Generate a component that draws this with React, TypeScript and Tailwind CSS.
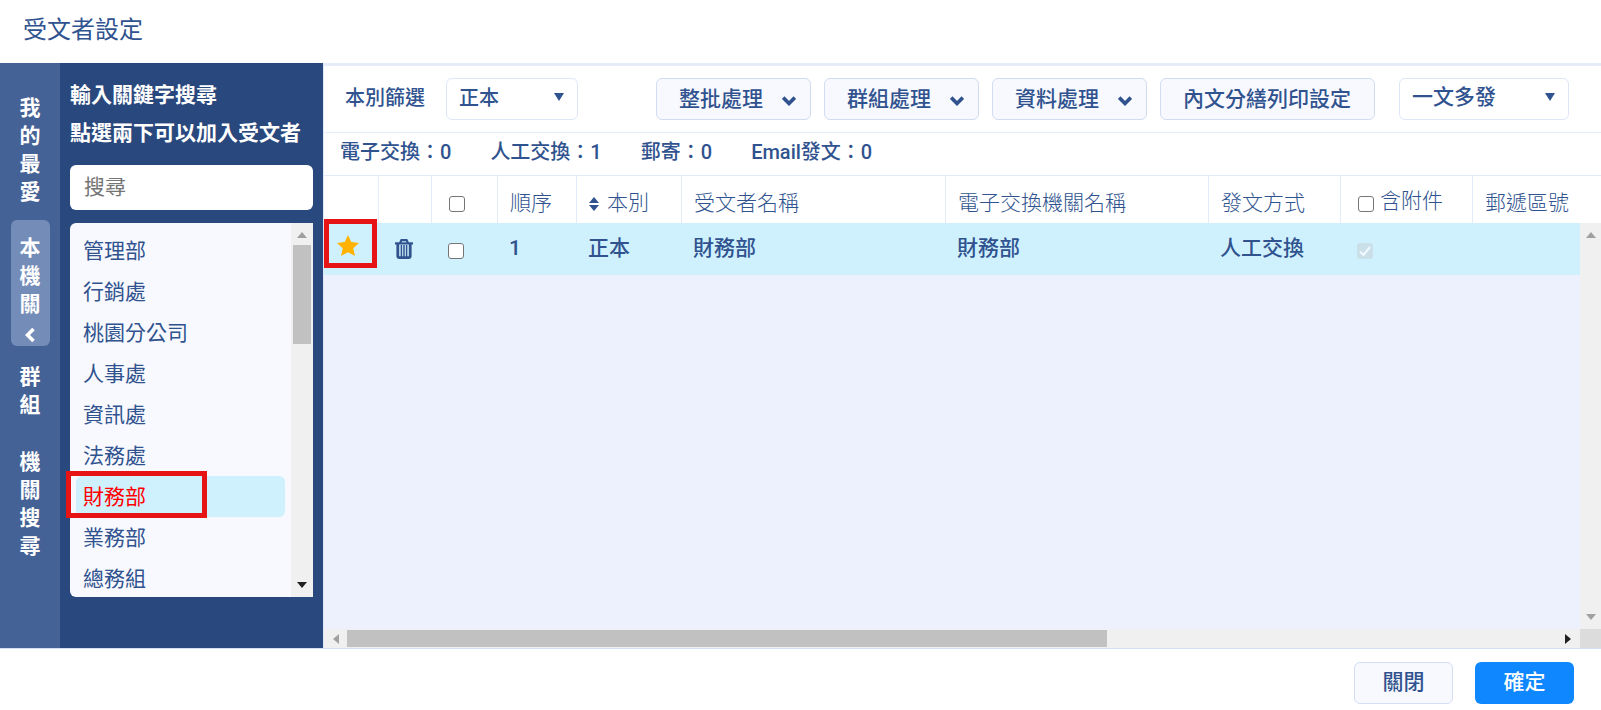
import type { ReactNode } from "react";

const departments = ["管理部", "行銷處", "桃園分公司", "人事處", "資訊處", "法務處", "財務部", "業務部", "總務組"];

const stats = ["電子交換：0", "人工交換：1", "郵寄：0", "Email發文：0"];

const arrowPaths = {
  up: "M0 6 L5 0 L10 6 Z",
  down: "M0 0 L10 0 L5 6 Z",
  left: "M6 0 L6 10 L0 5 Z",
  right: "M0 0 L6 5 L0 10 Z",
};

function Arrow({ dir, className }: { dir: keyof typeof arrowPaths; className: string }) {
  const flat = dir === "up" || dir === "down";
  return (
    <svg
      aria-hidden="true"
      viewBox={flat ? "0 0 10 6" : "0 0 6 10"}
      preserveAspectRatio="none"
      className={`shrink-0 ${className}`}
      fill="currentColor"
    >
      <path d={arrowPaths[dir]} />
    </svg>
  );
}

function Chevron() {
  return (
    <svg aria-hidden="true" viewBox="0 0 14 10" className="mt-[2px] h-[10px] w-[14px]" fill="none" stroke="currentColor" strokeWidth="3.6">
      <path d="M1.200 1.600 L7 7.400 L12.800 1.600" />
    </svg>
  );
}

function Trash() {
  return (
    <svg aria-hidden="true" viewBox="0 0 18 20" className="h-5 w-[18px]" fill="none" stroke="currentColor">
      <path d="M0 4.400 H18" strokeWidth="2.2" />
      <path d="M5 4 L6.400 1.200 H11.600 L13 4" strokeWidth="2.2" />
      <path d="M2.800 5 V17 Q2.800 18.600 4.400 18.600 H13.600 Q15.200 18.600 15.200 17 V5" strokeWidth="2.8" />
      <path d="M6.400 6 V18 M9 6 V18 M11.600 6 V18" strokeWidth="1.500" />
    </svg>
  );
}

function Star() {
  return (
    <svg aria-hidden="true" viewBox="0 0 22 21" className="h-[21px] w-[22px]" fill="#ffb300">
      <path d="M11 0 L14.300 7 L22 8 L16.300 13.200 L18 21 L11 17.200 L4 21 L5.700 13.200 L0 8 L7.700 7 Z" />
    </svg>
  );
}

function Picker({ label, value, options, className }: { label: string; value: string; options: string[]; className: string }) {
  return (
    <div className={`relative flex ${className}`}>
      <select
        aria-label={label}
        defaultValue={value}
        className="h-[42px] w-full appearance-none rounded-md border border-[#dfe6f7] bg-white pb-[2px] pl-3 font-medium"
      >
        {options.map((o) => (
          <option key={o}>{o}</option>
        ))}
      </select>
      <Arrow dir="down" className="pointer-events-none absolute top-[15px] right-[14px] h-2 w-[10px]" />
    </div>
  );
}

function ToolButton({ children, menu }: { children: ReactNode; menu?: boolean }) {
  return (
    <button
      type="button"
      className={`flex h-[42px] items-center gap-[19px] rounded-md border border-[#d0dcf0] bg-[#f8f9fe] pt-[2px] pl-[22px] text-[21px] font-medium whitespace-nowrap ${menu ? "pr-[14px]" : "pr-[23px]"}`}
    >
      {children}
      {menu && <Chevron />}
    </button>
  );
}

function SideTab({ name, active }: { name: string; active?: boolean }) {
  return (
    <button
      type="button"
      className={`flex w-[39px] flex-col items-center rounded-md text-[21px] leading-7 font-bold ${active ? "bg-[#748cb8] pt-[14px] pb-1" : ""}`}
    >
      {[...name].map((c) => (
        <span key={c}>{c}</span>
      ))}
      {active && (
        <svg aria-hidden="true" viewBox="0 0 10 14" className="mt-[10px] h-[14px] w-[10px]" fill="none" stroke="currentColor" strokeWidth="3.6">
          <path d="M8.500 1 L2.500 7 L8.500 13" />
        </svg>
      )}
    </button>
  );
}

const checkbox = "block size-4 appearance-none rounded-[3px] border border-[#767676] bg-white";
const th = "border-r border-[#e3eaf8] pl-3 pt-2 text-left font-light whitespace-nowrap";
const td = "pl-[11px] text-left font-medium whitespace-nowrap";

export default function App() {
  return (
    <div className="flex min-h-screen flex-col bg-white font-[Roboto,'Noto_Sans_CJK_TC',sans-serif] text-[#30538f]">
      <header className="flex h-[63px] items-center px-[23px] pb-1">
        <h1 className="text-2xl">受文者設定</h1>
      </header>

      <div className="flex flex-1 border-b border-[#d3dff5]">
        <nav className="flex w-[60px] shrink-0 flex-col items-center bg-[#456296] pt-[31px] text-white">
          <SideTab name="我的最愛" />
          <div className="mt-[14px]">
            <SideTab name="本機關" active />
          </div>
          <div className="mt-[17px]">
            <SideTab name="群組" />
          </div>
          <div className="mt-[29px]">
            <SideTab name="機關搜尋" />
          </div>
        </nav>

        <aside className="w-[263px] shrink-0 bg-[#29487d] px-[10px] pt-[13px]">
          <div className="text-[21px] leading-[38px] font-bold whitespace-nowrap text-white">
            <p>輸入關鍵字搜尋</p>
            <p>點選兩下可以加入受文者</p>
          </div>
          <input
            type="search"
            aria-label="搜尋"
            placeholder="搜尋"
            className="mt-[13px] block h-[45px] w-full rounded-md bg-white px-[14px] pb-[2px] text-[21px] placeholder:text-[#757575]"
          />
          <div className="mt-[13px] flex h-[374px] rounded-l-md bg-[#f8f9fe]">
            <ul className="flex-1 pt-[7px] pr-[6px] pl-[6px] text-[21px] leading-[39px]">
              {departments.map((d) => (
                <li key={d} className="relative">
                  <button
                    type="button"
                    className={`block w-full rounded-md pt-[2px] pl-[7px] text-left ${d === "財務部" ? "bg-[#cff1fe] text-[#ff0000]" : ""}`}
                  >
                    {d}
                  </button>
                  {d === "財務部" && (
                    <span className="pointer-events-none absolute -top-[5px] -left-[10px] h-[47px] w-[141px] border-5 border-[#e61414]" />
                  )}
                </li>
              ))}
            </ul>
            <div className="flex w-[22px] flex-col items-center bg-[#f0f0f0] py-[9px]">
              <Arrow dir="up" className="h-[6px] w-[10px] text-[#a0a0a0]" />
              <div className="mt-[7px] h-[99px] w-[18px] bg-[#c1c1c1]" />
              <Arrow dir="down" className="mt-auto h-[6px] w-[10px] text-[#202020]" />
            </div>
          </div>
        </aside>

        <main className="flex min-w-0 flex-1 flex-col border-l border-[#dfe6f7] bg-[#edf1fd]">
          <div className="flex h-[70px] items-center border-t-3 border-b border-[#e6ecf9] bg-white pr-8 pl-[21px] text-xl font-medium whitespace-nowrap">
            <span className="pb-[2px]">本別篩選</span>
            <Picker label="本別篩選" value="正本" options={["正本", "副本"]} className="ml-[21px] w-[132px]" />
            <div className="ml-auto flex gap-[13px]">
              <ToolButton menu>整批處理</ToolButton>
              <ToolButton menu>群組處理</ToolButton>
              <ToolButton menu>資料處理</ToolButton>
              <ToolButton>內文分繕列印設定</ToolButton>
            </div>
            <Picker label="發文類型" value="一文多發" options={["一文多發"]} className="ml-6 w-[170px] text-[21px]" />
          </div>

          <div className="flex h-[43px] items-center gap-[39px] border-b border-[#e3eaf8] bg-white px-4 pb-1 text-xl font-medium whitespace-nowrap">
            {stats.map((s) => (
              <span key={s}>{s}</span>
            ))}
          </div>

          <div className="relative flex-1 overflow-hidden">
            <table className="w-full table-fixed border-separate border-spacing-0 text-[21px]">
              <colgroup>
                <col className="w-[55px]" />
                <col className="w-[53px]" />
                <col className="w-[66px]" />
                <col className="w-[79px]" />
                <col className="w-[105px]" />
                <col className="w-[264px]" />
                <col className="w-[263px]" />
                <col className="w-[132px]" />
                <col className="w-[132px]" />
                <col />
              </colgroup>
              <thead>
                <tr className="h-[47px] bg-white">
                  <th className={th} />
                  <th className={th} />
                  <th className={th}>
                    <input type="checkbox" aria-label="全選" className={`${checkbox} ml-[5px]`} />
                  </th>
                  <th className={th}>順序</th>
                  <th className={th}>
                    <span className="flex items-center gap-2">
                      <span className="flex flex-col gap-[2px]">
                        <Arrow dir="up" className="h-[6px] w-[10px]" />
                        <Arrow dir="down" className="h-[6px] w-[10px]" />
                      </span>
                      本別
                    </span>
                  </th>
                  <th className={th}>受文者名稱</th>
                  <th className={th}>電子交換機關名稱</th>
                  <th className={th}>發文方式</th>
                  <th className={th}>
                    <label className="flex items-center gap-[6px]">
                      <input type="checkbox" className={`${checkbox} ml-[5px]`} />
                      <span className="pb-1">含附件</span>
                    </label>
                  </th>
                  <th className="pt-2 pl-3 text-left font-light whitespace-nowrap">郵遞區號</th>
                </tr>
              </thead>
              <tbody>
                <tr className="h-[52px] bg-[#cff1fe]">
                  <td className="relative pb-2 pl-[13px]">
                    <button type="button" aria-label="我的最愛" className="block">
                      <Star />
                    </button>
                    <span className="pointer-events-none absolute -top-1 left-0 h-[49px] w-[53px] border-5 border-[#e61414]" />
                  </td>
                  <td className="pl-4">
                    <button type="button" aria-label="刪除" className="block">
                      <Trash />
                    </button>
                  </td>
                  <td className="pt-1 pl-4">
                    <input type="checkbox" aria-label="選取財務部" className={checkbox} />
                  </td>
                  <td className={td}>1</td>
                  <td className={td}>正本</td>
                  <td className={td}>財務部</td>
                  <td className={td}>財務部</td>
                  <td className={td}>人工交換</td>
                  <td className="pt-1 pl-4">
                    <span className="relative block size-4">
                      <input type="checkbox" aria-label="含附件" defaultChecked disabled className="block size-4 appearance-none rounded-[3px] bg-[#cbdfe8]" />
                      <svg aria-hidden="true" viewBox="0 0 16 16" className="absolute inset-0" fill="none" stroke="#eefaff" strokeWidth="2">
                        <path d="M3 8.500 L6.500 12 L13 4" />
                      </svg>
                    </span>
                  </td>
                  <td />
                </tr>
              </tbody>
            </table>
            <div className="absolute top-[47px] right-0 bottom-0 flex w-[21px] flex-col items-center justify-between bg-[#f0f0f0] py-[9px]">
              <Arrow dir="up" className="h-[6px] w-[10px] text-[#a0a0a0]" />
              <Arrow dir="down" className="h-[6px] w-[10px] text-[#a0a0a0]" />
            </div>
          </div>

          <div className="flex h-[19px] bg-[#f0f0f0]">
            <div className="flex flex-1 items-center justify-between px-[9px]">
              <Arrow dir="left" className="h-[10px] w-[6px] text-[#a0a0a0]" />
              <div className="mr-auto ml-2 h-[17px] w-[61.4%] bg-[#c1c1c1]" />
              <Arrow dir="right" className="h-[10px] w-[6px] text-[#202020]" />
            </div>
            <div className="w-[21px] bg-[#dcdcdc]" />
          </div>
        </main>
      </div>

      <footer className="flex h-[61px] items-center justify-end gap-[22px] pt-2 pr-[27px] pb-[2px] text-[21px] font-medium">
        <button type="button" className="h-[42px] w-[99px] rounded-md border border-[#d3def2] bg-[#f8f9fe]">
          關閉
        </button>
        <button type="button" className="h-[42px] w-[99px] rounded-md bg-[#0f87ff] text-white">
          確定
        </button>
      </footer>
    </div>
  );
}
